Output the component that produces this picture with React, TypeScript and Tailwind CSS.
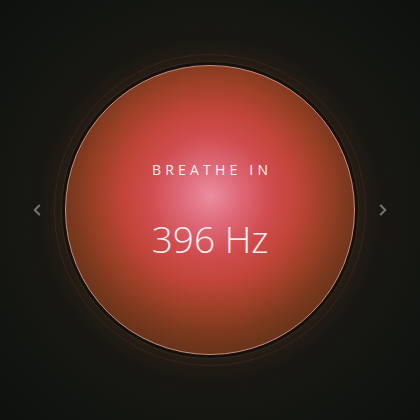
import { ChevronLeft, ChevronRight } from 'lucide-react';

// Breathing orb - frequency display with prev/next arrows
export default function App() {
    return (
        <div className="w-[420px] h-[420px] flex items-center justify-center bg-[radial-gradient(circle_at_50%_50%,#2b2118_0%,#1e1a15_45%,#131511_75%,#0e100e_100%)]">
            <div className="flex items-center gap-[8px]">
                <button className="w-[18px] flex justify-center text-[#74746e]">
                    <ChevronLeft size={18} strokeWidth={2.75} />
                </button>

                {/* outer faint rings */}
                <div className="rounded-full border border-[#342a22]/70 p-[6px]">
                    <div className="rounded-full border border-[#3a2d24]/80 bg-[#16110d] p-[3px] shadow-[0_0_30px_rgba(120,60,30,0.25)]">
                        <div className="w-[290px] h-[290px] rounded-full border-[1.5px] border-[#c58d7c] bg-[radial-gradient(circle_160px_at_50%_45%,#ea8e9f_0%,#df6a7a_18%,#d04c4e_38%,#c04538_55%,#9c4026_72%,#7c391e_86%,#66331a_100%)] flex flex-col items-center justify-center [font-family:'Open_Sans',sans-serif] text-[#fbeff0]">
                            <div className="text-[14px] tracking-[0.3em] pl-[0.3em] mt-[-4px] font-normal">BREATHE IN</div>
                            <div className="text-[37px] font-light leading-none mt-[40px]">396 Hz</div>
                        </div>
                    </div>
                </div>

                <button className="w-[18px] flex justify-center text-[#74746e]">
                    <ChevronRight size={18} strokeWidth={2.75} />
                </button>
            </div>
        </div>
    );
}
